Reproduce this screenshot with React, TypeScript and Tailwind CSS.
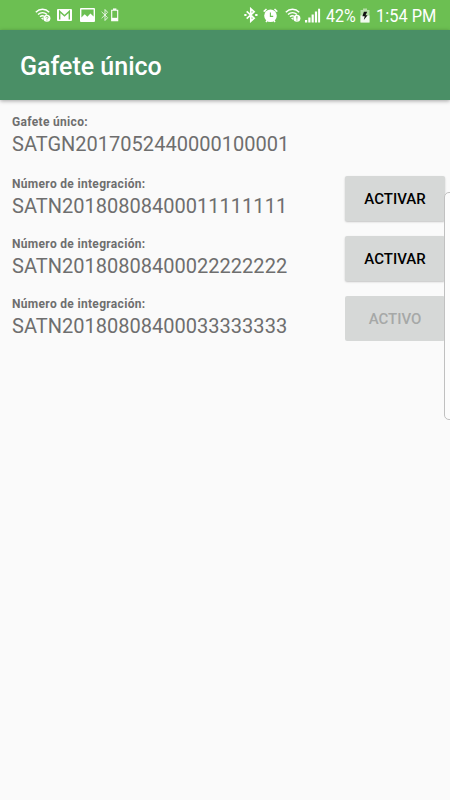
import clsx from "clsx";

const badges = [
  { id: "SATN20180808400011111111", active: false },
  { id: "SATN20180808400022222222", active: false },
  { id: "SATN20180808400033333333", active: true },
];

const Wifi = ({ mark }: { mark: string }) => (
  <svg width="16" height="16" viewBox="0 0 16 16" fill="none" stroke="#fff">
    <path d="M.8 5.2C4.6 1.3 10.4 1.3 14.2 5.2" strokeWidth="1.4" />
    <path d="M3 7.6c2.6-2.6 6.4-2.6 9 0" strokeWidth="1.4" />
    <path d="M5 9.9c1.2-1.3 2.6-1.5 4-.8" strokeWidth="1.4" />
    <path d="M6 11.6l1.6-1.2.8 2.6z" fill="#fff" stroke="none" />
    <circle cx="11.9" cy="11.2" r="3.5" fill="#fff" stroke="none" />
    {mark === "?" ? (
      <path d="M10.8 10.4c0-1.5 2.3-1.4 2.2 0-.1.8-1.1.8-1.1 1.7M11.9 12.7v.8" stroke="#6cbf52" strokeWidth=".9" />
    ) : (
      <path d="M11.9 9v2.7M11.9 12.5v.9" stroke="#6cbf52" strokeWidth="1.1" />
    )}
  </svg>
);

const StatusBar = () => (
  <div className="flex h-[30px] items-center bg-[#6cbf52] text-white">
    <div className="flex items-center pl-[35px]">
      <Wifi mark="?" />
      <svg className="ml-[6px]" width="15" height="12" viewBox="0 0 15 12">
        <rect width="15" height="12" rx="1" fill="#fff" />
        <path d="M2.7 10.4V2.4l4.8 4.4 4.8-4.4v8" fill="none" stroke="#6cbf52" strokeWidth="1.4" />
      </svg>
      <svg className="ml-2" width="15" height="14" viewBox="0 0 15 14">
        <path
          d="M1 0h13a1 1 0 0 1 1 1v12a1 1 0 0 1-1 1H1a1 1 0 0 1-1-1V1a1 1 0 0 1 1-1zM1.4 1.4v8.2l3.3-3.3 2.7 2.5 3-3.4 3.2 3.2V1.4z"
          fill="#fff"
          fillRule="evenodd"
        />
      </svg>
      <svg className="ml-[6px]" width="18" height="14" viewBox="0 0 18 14" fill="none" stroke="#fff">
        <path d="M.6 3.8l6 5.9L4 12.5V1.5l2.6 2.8-6 5.9" strokeWidth="1" opacity=".8" />
        <path d="M10.7 2.3h6v10.4h-6z" strokeWidth="1.1" />
        <path d="M12 1.2h3.4" strokeWidth="1.5" />
        <path d="M10.7 9.8h6v3h-6z" fill="#fff" stroke="none" />
      </svg>
    </div>
    <div className="ml-auto flex items-center pr-[14px]">
      <svg width="14" height="16" viewBox="0 0 14 16" fill="none" stroke="#fff">
        <path d="M2.7 4.4l7.4 6.8-3.3 3V1.8l3.3 3-7.4 6.8" strokeWidth="1.7" />
        <path d="M.3 8h2.2M11.2 8h2.3" strokeWidth="2" />
      </svg>
      <svg className="ml-[5px]" width="15" height="15" viewBox="0 0 15 15">
        <circle cx="7.5" cy="7.8" r="6.3" fill="#fff" />
        <path d="M.7 3.6L3.5 1M14.3 3.6L11.5 1M3 14l1-1.4M12 14l-1-1.4" stroke="#fff" strokeWidth="1.5" />
        <path d="M7.4 4.5v3.9h2.8" fill="none" stroke="#6cbf52" strokeWidth="1.1" />
      </svg>
      <div className="ml-[7px]">
        <Wifi mark="!" />
      </div>
      <svg className="ml-1" width="16" height="15" viewBox="0 0 16 15" fill="#fff">
        <path d="M0 12h2.2v2.5H0zM3.3 9.5h2.2v5H3.3zM6.6 6.5h2.2v8H6.6zM9.9 3.5h2.2v11H9.9z" />
        <path d="M13.1 .7h2v13.8h-2z" />
      </svg>
      <div className="ml-[5px] w-[31px] text-[18px] leading-[30px]">
        <span className="inline-block origin-left scale-x-[.89] pt-px">42%</span>
      </div>
      <svg className="ml-[3px]" width="10" height="15" viewBox="0 0 10 15">
        <path d="M3 .5h4V2h2.5v12.5h-9V2H3z" fill="#fff" opacity=".5" />
        <path d="M.5 7.5h9v7h-9z" fill="#fff" opacity=".8" />
        <path d="M3.9 3.8L2.4 8.3h2.3l-.9 3.7L7.6 7.2H5.5l1.7-3.4z" fill="#111" />
      </svg>
      <div className="ml-[6px] w-[60px] text-[18px] leading-[30px] whitespace-nowrap">
        <span className="inline-block origin-left scale-x-[.91] pt-px">1:54 PM</span>
      </div>
    </div>
  </div>
);

const Label = ({ title, value }: { title: string; value: string }) => (
  <div className="text-[#6e6e6e]">
    <p className="text-[12px] leading-[18px] font-bold tracking-[.32px]">{title}</p>
    <p className="text-[20px] leading-[26px] tracking-[.02px]">{value}</p>
  </div>
);

const App = () => {
  return (
    <div className="relative min-h-screen overflow-hidden bg-[#fafafa] font-['Roboto',sans-serif]">
      <StatusBar />
      <header className="flex h-[70px] items-center bg-[#4a8f66] pt-[3px] pl-5 shadow-[0_1px_4px_rgba(0,0,0,0.35)]">
        <h1 className="text-[25px] font-medium text-white">Gafete único</h1>
      </header>

      <main className="pl-3">
        <div className="h-[75px] pt-[13px]">
          <Label title="Gafete único:" value="SATGN2017052440000100001" />
        </div>
        {badges.map((badge) => (
          <div key={badge.id} className="flex h-[60px] justify-between pr-[5px]">
            <Label title="Número de integración:" value={badge.id} />
            <button
              disabled={badge.active}
              className={clsx(
                "mt-px h-[45px] w-[100px] rounded-[2px] bg-[#d6d8d7] pt-[2px] text-[15px] font-medium",
                badge.active ? "text-[#a6a8a7]" : "text-black shadow-[0_1px_2px_rgba(0,0,0,0.22)]"
              )}
            >
              {badge.active ? "ACTIVO" : "ACTIVAR"}
            </button>
          </div>
        ))}
      </main>

      {/* Edge panel handle */}
      <div className="absolute top-[192px] -right-[6px] h-[228px] w-3 rounded-[5px] border border-[#c0c0c0] bg-[#fcfcfc]" />
    </div>
  );
};

export default App;
